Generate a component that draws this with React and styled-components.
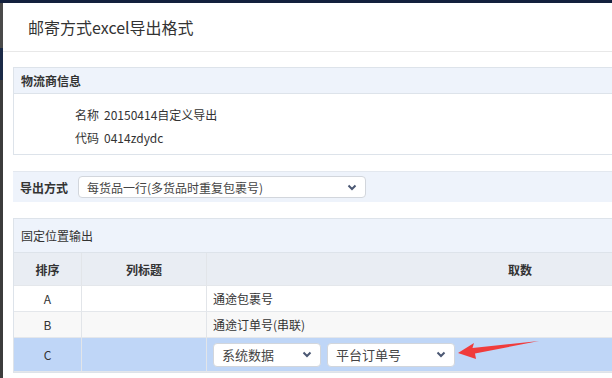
import styled, { createGlobalStyle } from "styled-components";

const GlobalStyle = createGlobalStyle`
  html, body {
    margin: 0;
    padding: 0;
    height: 100%;
    overflow: hidden;
  }
  body {
    font-family: "Noto Sans CJK SC", "Noto Sans", "Liberation Sans", sans-serif;
    font-size: 12px;
    color: #333;
    background:
      linear-gradient(#13203d 0 3px, transparent 3px),
      linear-gradient(#4a4a4a 0 48px, #1b2a47 48px 80px, #3c3c3c 80px);
  }
`;

const Page = styled.div`
  padding: 3px 0 0 3px;
`;

const Modal = styled.div`
  width: 831px;
  height: 380px;
  background: #fff;
`;

const ModalHeader = styled.div`
  height: 48px;
  display: flex;
  align-items: center;
  padding-left: 25px;
  font-size: 16px;
  color: #333;
  border-bottom: 1px solid #e8e8e8;
`;

const ModalBody = styled.div`
  padding: 15px 0 0 10px;
  display: flex;
  flex-direction: column;
  gap: 16px;
`;

const Panel = styled.div`
  border: 1px solid #dde3ea;
  border-right: none;
`;

const PanelHead = styled.div`
  height: ${(p) => p.$h || 26}px;
  display: flex;
  align-items: center;
  padding-left: 7px;
  box-sizing: border-box;
  background: #eef3fb;
  font-weight: ${(p) => (p.$bold ? 700 : 400)};
  color: #333;
  border-bottom: 1px solid #dde3ea;
`;

const InfoBody = styled.div`
  padding: 11px 0 8px 61px;
  display: flex;
  flex-direction: column;
  gap: 5px;
`;

const InfoRow = styled.div`
  height: 18px;
  display: flex;
  align-items: center;
  gap: 5px;
`;

const Bar = styled.div`
  height: 30px;
  display: flex;
  align-items: center;
  gap: 10px;
  padding-left: 7px;
  background: #eef3fb;
  border-top: 1px solid #e3e8ef;
`;

const Label = styled.span`
  font-weight: 700;
`;

const Select = styled.div`
  width: ${(p) => p.$w}px;
  height: ${(p) => p.$hgt || 22}px;
  box-sizing: border-box;
  display: flex;
  align-items: center;
  justify-content: space-between;
  padding: 0 8px;
  background: #fff;
  border: 1px solid #d2d6dc;
  border-radius: 4px;
  font-size: ${(p) => p.$fs || 12}px;
  color: #444;
`;

const Table = styled.div`
  display: grid;
  grid-template-columns: 68px 125px 1fr;
`;

const Cell = styled.div`
  height: ${(p) => p.$h}px;
  box-sizing: border-box;
  display: flex;
  align-items: center;
  justify-content: ${(p) => (p.$left ? "flex-start" : "center")};
  padding-left: ${(p) => (p.$left ? "6px" : "0")};
  gap: 6px;
  background: ${(p) => p.$bg};
  font-weight: ${(p) => (p.$bold ? 700 : 400)};
  border-right: 1px solid #e2e5e9;
  border-bottom: 1px solid #e4e7eb;
  position: relative;
`;

const Arrow = styled.svg`
  position: absolute;
  left: 250px;
  top: 1px;
`;

const Chevron = () => (
  <svg width="10" height="7" viewBox="0 0 10 7">
    <path d="M1.5 1.5 L5 5 L8.5 1.5" fill="none" stroke="#4b5873" strokeWidth="2" />
  </svg>
);

const rows = [
  { key: "A", value: "通途包裹号", bg: "#fff", h: 26 },
  { key: "B", value: "通途订单号(串联)", bg: "#f8f8f8", h: 26 },
];

export default function App() {
  return (
    <Page>
      <GlobalStyle />
      <Modal>
        <ModalHeader>邮寄方式excel导出格式</ModalHeader>
        <ModalBody>
          <Panel>
            <PanelHead $bold>物流商信息</PanelHead>
            <InfoBody>
              <InfoRow>
                <span>名称</span>
                <span>20150414自定义导出</span>
              </InfoRow>
              <InfoRow>
                <span>代码</span>
                <span>0414zdydc</span>
              </InfoRow>
            </InfoBody>
          </Panel>

          <Bar>
            <Label>导出方式</Label>
            <Select $w={288}>
              <span>每货品一行(多货品时重复包裹号)</span>
              <Chevron />
            </Select>
          </Bar>

          <Panel>
            <PanelHead $h={34}>固定位置输出</PanelHead>
            <Table>
              <Cell $h={33} $bg="#e9edf3" $bold>排序</Cell>
              <Cell $h={33} $bg="#e9edf3" $bold>列标题</Cell>
              <Cell $h={33} $bg="#e9edf3" $bold>取数</Cell>
              {rows.map((r) => [
                <Cell key={r.key + "k"} $h={r.h} $bg={r.bg}>{r.key}</Cell>,
                <Cell key={r.key + "t"} $h={r.h} $bg={r.bg} />,
                <Cell key={r.key + "v"} $h={r.h} $bg={r.bg} $left>{r.value}</Cell>,
              ])}
              <Cell $h={34} $bg="#bfd6f7">C</Cell>
              <Cell $h={34} $bg="#bfd6f7" />
              <Cell $h={34} $bg="#bfd6f7" $left>
                <Select $w={108} $hgt={24} $fs={13}>
                  <span>系统数据</span>
                  <Chevron />
                </Select>
                <Select $w={128} $hgt={24} $fs={13}>
                  <span>平台订单号</span>
                  <Chevron />
                </Select>
                <Arrow width="84" height="22" viewBox="0 0 84 22">
                  <path d="M1 14 L17 4 L15.5 9 L82 2 L18 14.5 L19 20 Z" fill="#f03c3c" />
                </Arrow>
              </Cell>
            </Table>
          </Panel>
        </ModalBody>
      </Modal>
    </Page>
  );
}
